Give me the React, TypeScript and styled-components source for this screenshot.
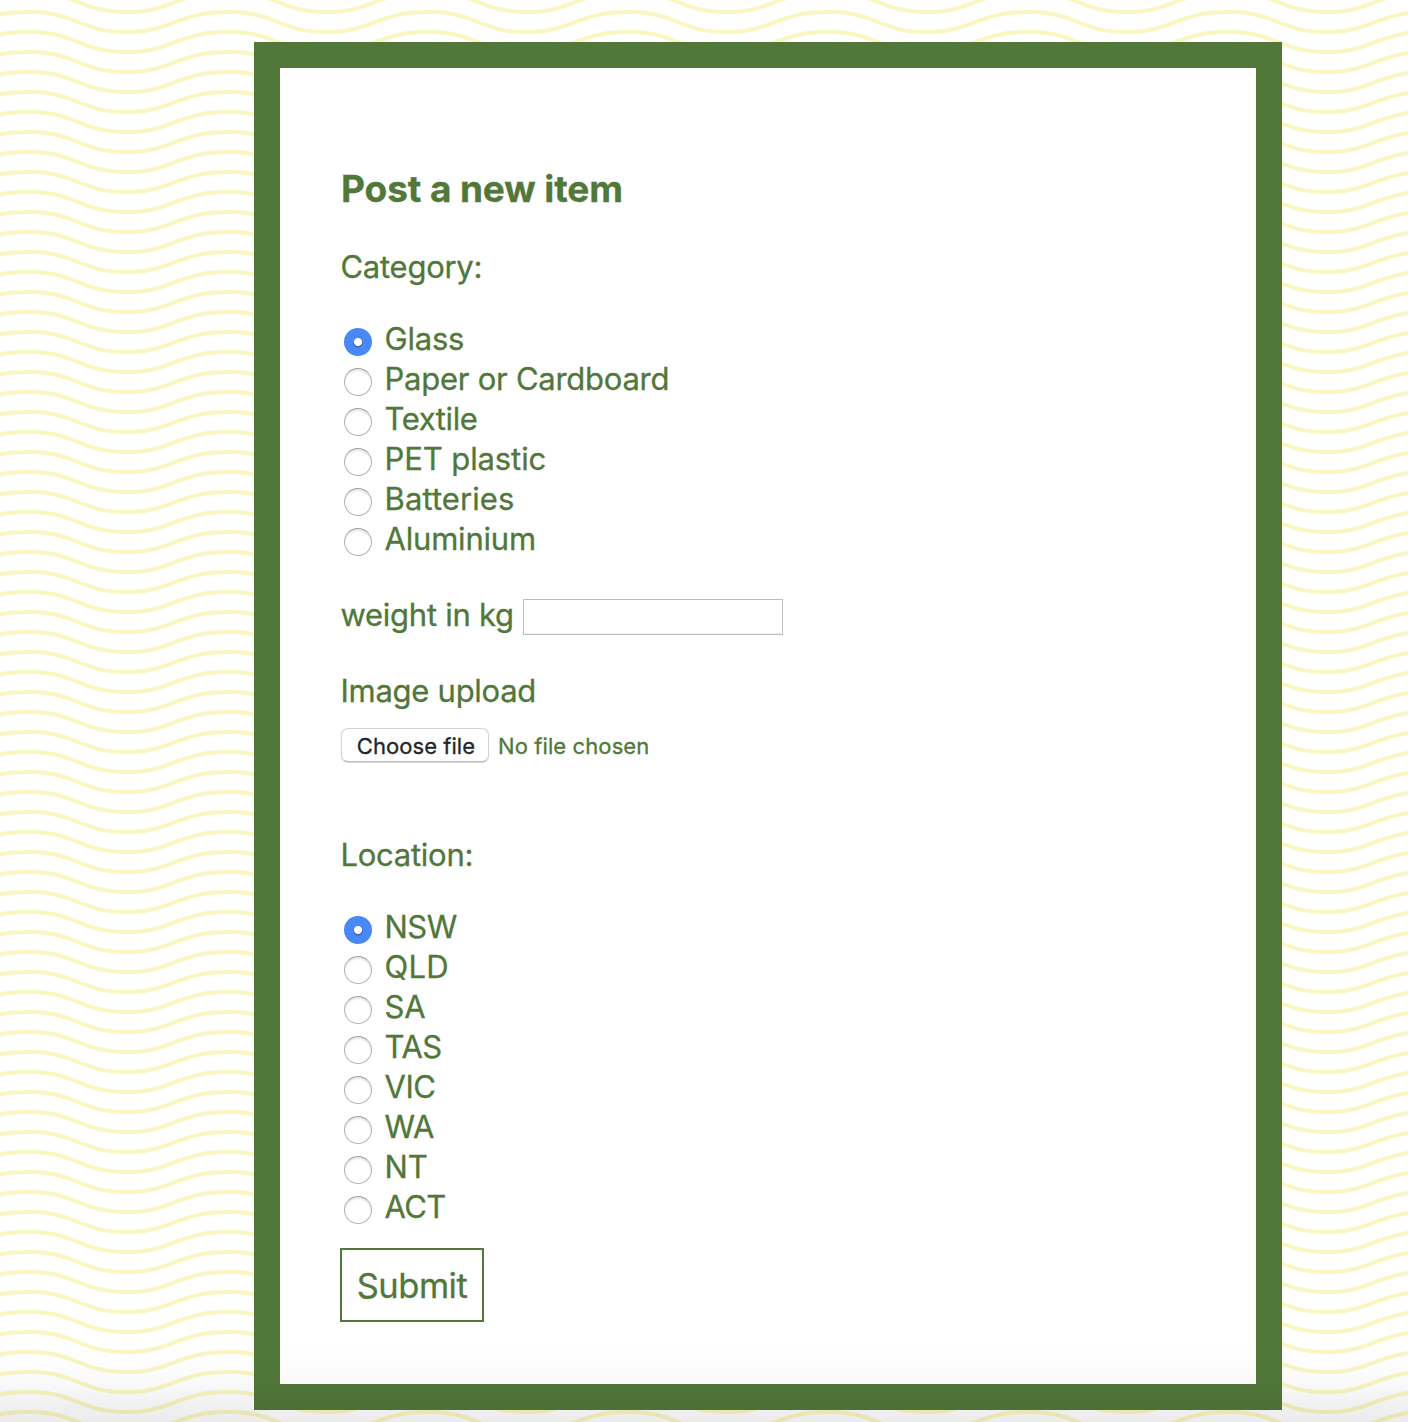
import React, { useState } from "react";
import styled, { createGlobalStyle } from "styled-components";

const green = "#517739";
const wave =
  "M21.184 20c.357-.13.72-.264 1.088-.402l1.768-.661C33.64 15.347 39.647 14 50 14c10.271 0 15.362 1.222 24.629 4.928.955.383 1.869.74 2.75 1.072h6.225c-2.51-.73-5.139-1.691-8.233-2.928C65.888 13.278 60.562 12 50 12c-10.626 0-16.855 1.397-26.66 5.063l-1.767.662c-2.475.923-4.66 1.674-6.724 2.275h6.335zm0-20C13.258 2.892 8.077 4 0 4V2c5.744 0 9.951-.574 14.85-2h6.334zM77.38 0C85.239 2.966 90.502 4 100 4V2c-6.842 0-11.386-.542-16.396-2h-6.225zM0 14c8.44 0 13.718-1.21 22.272-4.402l1.768-.661C33.64 5.347 39.647 4 50 4c10.271 0 15.362 1.222 24.629 4.928C84.112 12.722 89.438 14 100 14v-2c-10.271 0-15.362-1.222-24.629-4.928C65.888 3.278 60.562 2 50 2 39.374 2 33.145 3.397 23.34 7.063l-1.767.662C13.223 10.84 8.163 12 0 12v2z";
const tile = `data:image/svg+xml,%3Csvg xmlns='http://www.w3.org/2000/svg' width='200' height='40' viewBox='0 0 100 20'%3E%3Cpath d='${wave}' fill='%23f9f6c0' fill-rule='evenodd'/%3E%3C/svg%3E`;

const GlobalStyle = createGlobalStyle`
  *, *::before, *::after { box-sizing: border-box; }
  body {
    margin: 0;
    background: #fff;
    color: ${green};
    font: 31px/40px Inter, "Liberation Sans", sans-serif;
    -webkit-text-stroke: 0.3px currentColor;
  }
`;

const Page = styled.main`
  position: relative;
  height: 1422px;
  overflow: hidden;
  padding: 42px 126px 12px 254px;
  background: url("${tile}") 128px 6px / 200px 40px;
`;

const BottomShade = styled.div`
  position: absolute;
  inset: auto 0 0;
  height: 84px;
  pointer-events: none;
  background: linear-gradient(
    rgba(0, 0, 0, 0),
    rgba(0, 0, 0, 0.008) 30%,
    rgba(0, 0, 0, 0.025) 55%,
    rgba(0, 0, 0, 0.057) 80%,
    rgba(0, 0, 0, 0.075)
  );
`;

const Form = styled.form`
  display: flex;
  flex-direction: column;
  align-items: flex-start;
  height: 1368px;
  padding: 98px 60px 0;
  border: 26px solid ${green};
  background: #fff;
`;

const Title = styled.h3`
  margin: 0 0 36px;
  padding-left: 1px;
  font-size: 37px;
  line-height: 45px;
  font-weight: 700;
  letter-spacing: -0.1px;
`;

const Label = styled.div`
  padding-left: 0.5px;
  letter-spacing: -0.27px;
  white-space: nowrap;
`;

const Options = styled.div<{ $after: number }>`
  display: flex;
  flex-direction: column;
  margin: 32px 0 ${({ $after }) => $after}px;
`;

const Option = styled.label<{ $tracking: number }>`
  display: flex;
  gap: 12.5px;
  height: 40px;
  padding-left: 4px;
  letter-spacing: ${({ $tracking }) => $tracking}px;
  white-space: nowrap;
`;

const Radio = styled.input`
  appearance: none;
  flex: none;
  width: 28px;
  height: 28px;
  margin: 9px 0 0;
  border: 1px solid #b4b4b4;
  border-top-color: #a0a0a0;
  border-radius: 50%;
  background: #fff;
  box-shadow: inset 0 2px 2px rgba(0, 0, 0, 0.1);

  &:checked {
    border: 0;
    background: radial-gradient(circle, #fff 3.6px, transparent 4.4px),
      radial-gradient(circle at 50% 54%, #3467bd 3.8px, transparent 5.2px), #4a88f7;
    box-shadow: none;
  }
`;

const WeightRow = styled.div`
  display: flex;
  align-items: flex-start;
  width: 443px;
  margin-bottom: 36px;
`;

const WeightInput = styled.input`
  width: 260px;
  height: 36px;
  margin: 4px 0 0 auto;
  padding: 2px 4px;
  border: 1px solid #bdbdbd;
  border-radius: 0;
  background: #fff;
  box-shadow: inset 0 -1px #f0f0f0;
  font: 22px Inter, sans-serif;
  outline: 0;
`;

const FileRow = styled.div`
  display: flex;
  align-items: center;
  gap: 9px;
  height: 34px;
  margin: 17px 0 73px 1px;
  font-size: 22px;
  letter-spacing: 0.1px;
`;

const FileButton = styled.button`
  width: 148px;
  height: 34px;
  padding: 1px 0 0 2px;
  border: 1px solid #d2d2d2;
  border-bottom-color: #b9b9b9;
  border-radius: 7px;
  background: #fff;
  box-shadow: 0 1px 1px rgba(0, 0, 0, 0.15);
  color: #252525;
  font: 22px/32px Inter, sans-serif;
  letter-spacing: 0.05px;
  white-space: nowrap;
`;

const FileStatus = styled.span`
  padding-top: 2px;
  line-height: 34px;
  white-space: nowrap;
`;

const Submit = styled.button`
  width: 144px;
  height: 74px;
  padding: 2px 0 0;
  border: 2px solid ${green};
  background: transparent;
  color: ${green};
  font: 34.5px/68px Inter, sans-serif;
  letter-spacing: -0.5px;
`;

type Choice = [name: string, tracking: number];

const categories: Choice[] = [
  ["Glass", -0.2],
  ["Paper or Cardboard", -0.25],
  ["Textile", -0.4],
  ["PET plastic", -0.1],
  ["Batteries", 0.1],
  ["Aluminium", -0.2],
];

const states: Choice[] = [
  ["NSW", -0.5],
  ["QLD", 0.2],
  ["SA", -0.2],
  ["TAS", -0.5],
  ["VIC", -0.5],
  ["WA", -0.3],
  ["NT", -0.2],
  ["ACT", -0.6],
];

function RadioList({ name, choices, after }: { name: string; choices: Choice[]; after: number }) {
  const [selected, setSelected] = useState(choices[0][0]);
  return (
    <Options $after={after}>
      {choices.map(([choice, tracking]) => (
        <Option key={choice} $tracking={tracking}>
          <Radio
            type="radio"
            name={name}
            checked={selected === choice}
            onChange={() => setSelected(choice)}
          />
          {choice}
        </Option>
      ))}
    </Options>
  );
}

export default function App() {
  return (
    <Page>
      <GlobalStyle />
      <Form onSubmit={(event) => event.preventDefault()}>
        <Title>Post a new item</Title>
        <Label>Category:</Label>
        <RadioList name="category" choices={categories} after={36} />
        <WeightRow>
          <Label as="label" htmlFor="weight">weight in kg</Label>
          <WeightInput id="weight" />
        </WeightRow>
        <Label>Image upload</Label>
        <FileRow>
          <FileButton type="button">Choose file</FileButton>
          <FileStatus>No file chosen</FileStatus>
        </FileRow>
        <Label>Location:</Label>
        <RadioList name="location" choices={states} after={21} />
        <Submit>Submit</Submit>
      </Form>
      <BottomShade />
    </Page>
  );
}
